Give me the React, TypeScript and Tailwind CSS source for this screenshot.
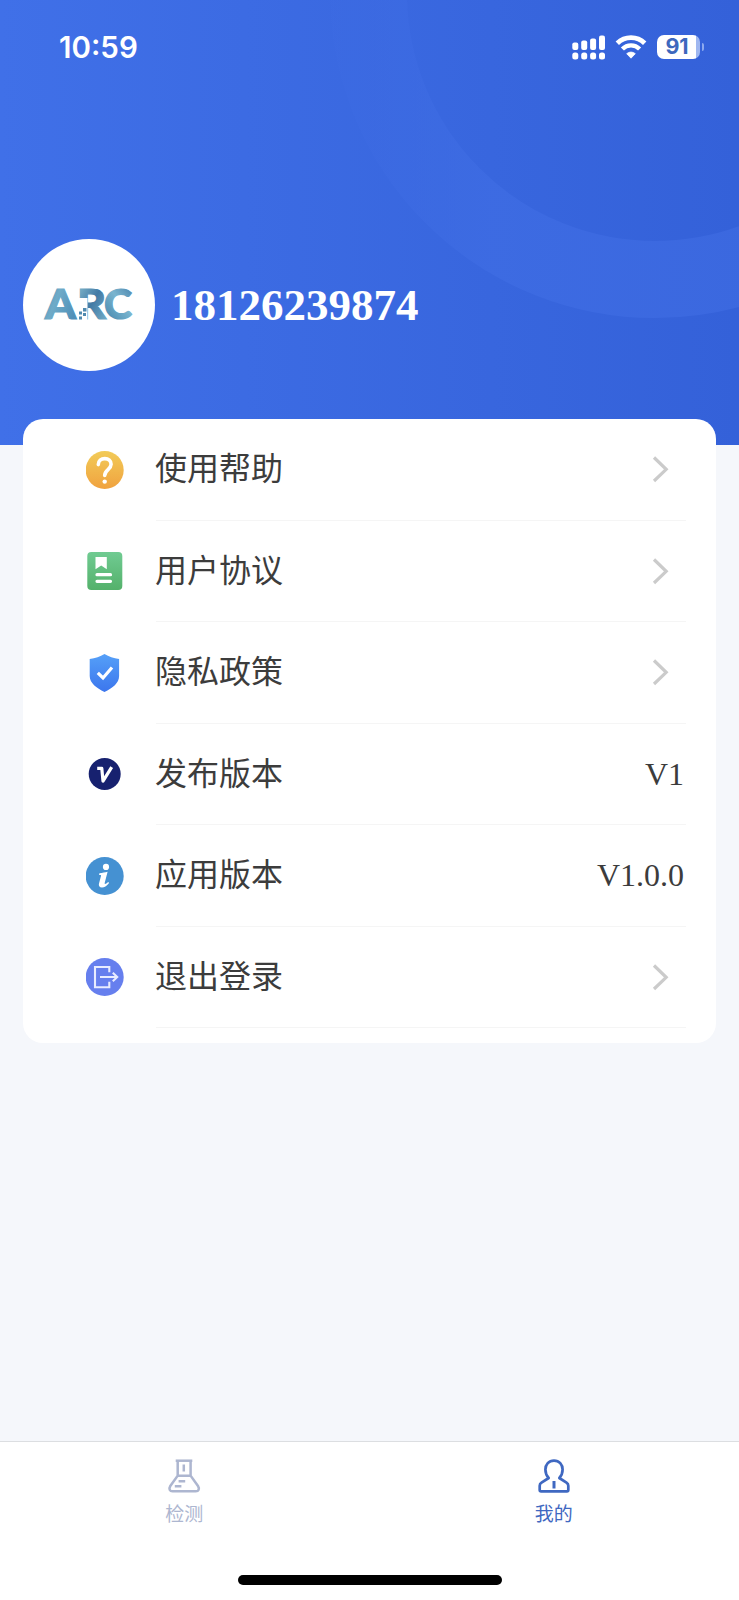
import type { ReactNode } from 'react';

type MenuItem = {
    label: string;
    icon: ReactNode;
    value?: string;
};

function HelpIcon() {
    return (
        <svg width="38" height="38" viewBox="0 0 38 38" fill="none">
            <defs>
                <linearGradient id="help" x1="0" y1="0" x2="0" y2="1">
                    <stop stopColor="#f2cb58" />
                    <stop offset="1" stopColor="#f0a23f" />
                </linearGradient>
            </defs>
            <circle cx="18.700" cy="19" r="19" fill="url(#help)" />
            <path d="M12.300 13.600c0-3.800 2.900-6 6.500-6s6.300 2.300 6.300 5.700c0 5.200-6.400 5.400-6.400 11.200" stroke="#fff" strokeWidth="3.600" strokeLinecap="round" />
            <circle cx="18.700" cy="30.600" r="2.200" fill="#fff" />
        </svg>
    );
}

function AgreementIcon() {
    return (
        <svg width="38" height="38" viewBox="0 0 38 38" fill="none">
            <defs>
                <linearGradient id="agreement" x1="0" y1="0" x2="0" y2="1">
                    <stop stopColor="#70cb92" />
                    <stop offset="1" stopColor="#54b16b" />
                </linearGradient>
            </defs>
            <rect x="1.300" width="35" height="38" rx="4" fill="url(#agreement)" />
            <path d="M9.500 5h11.300v12.200L15.200 13.500l-5.700 3.700z" fill="#fff" />
            <path d="M11 22.700h13.500M11 29.300h13.500" stroke="#fff" strokeWidth="3.200" strokeLinecap="round" />
        </svg>
    );
}

function PrivacyIcon() {
    return (
        <svg width="38" height="38" viewBox="0 0 38 38" fill="none">
            <defs>
                <linearGradient id="privacy" x1="0" y1="0" x2="0" y2="1">
                    <stop stopColor="#55a0f8" />
                    <stop offset="1" stopColor="#3c76ed" />
                </linearGradient>
            </defs>
            <path d="M18.500 0c4.500 2.800 9 4.300 14.600 5V22c0 7-6.400 12-14.600 16C10.500 34 3.700 29 3.700 22V5C9.500 4.300 14 2.800 18.500 0z" fill="url(#privacy)" />
            <path d="M11.800 18.800l5.200 5.200L26 13.500" stroke="#fff" strokeWidth="3.200" />
        </svg>
    );
}

function ReleaseIcon() {
    return (
        <svg width="38" height="38" viewBox="0 0 38 38" fill="none">
            <circle cx="18.700" cy="19" r="16" fill="#17216f" />
            <path d="M11.200 13.300h4.600l1.200 12.900L25.700 12.200" stroke="#fff" strokeWidth="3.200" strokeLinejoin="round" />
        </svg>
    );
}

function InfoIcon() {
    return (
        <svg width="38" height="38" viewBox="0 0 38 38" fill="none">
            <circle cx="18.700" cy="19" r="19" fill="#4591d2" />
            <circle cx="20" cy="9.900" r="3.100" fill="#fff" />
            <path d="M13.400 16.300c3.200-.4 5.600-1 8.200-1.500L18.700 26c-.4 1.500.9 1.400 3.600-.9l.8.900c-2.600 3.200-4.700 4.400-7.100 4.400-2.700 0-3.600-1.700-3-4l2-7.400c.3-.9-.2-1.200-1.900-1z" fill="#fff" />
        </svg>
    );
}

function LogoutIcon() {
    return (
        <svg width="38" height="38" viewBox="0 0 38 38" fill="none">
            <circle cx="18.700" cy="19" r="19" fill="#667fee" />
            <g stroke="#e8ecff" strokeWidth="2.100">
                <path d="M23.300 14.200V9H9v20.300h14.300v-5.500" />
                <path d="M14 19h17M26.800 14.800l4.400 4.200-4.400 4.200" />
            </g>
        </svg>
    );
}

function Chevron() {
    return (
        <svg width="18" height="28" viewBox="0 0 18 28" fill="none" className="mr-4">
            <path d="M2 2.500l12.200 11.800L2 26" stroke="#cbcbcb" strokeWidth="3.200" />
        </svg>
    );
}

function StatusBar() {
    return (
        <div className="flex h-[94px] items-center justify-between pl-[59px] pr-[35px] text-white">
            <span className="mt-px font-['Inter',sans-serif] text-[29.500px] font-semibold leading-none">10:59</span>
            <div className="flex items-center">
                <svg width="33" height="25" viewBox="0 0 33 25" fill="#fff">
                    <rect x="0.300" y="7.500" width="6" height="7.500" rx="2" />
                    <rect x="9.200" y="5.500" width="6" height="9.500" rx="2" />
                    <rect x="18.100" y="3.500" width="6" height="11.500" rx="2" />
                    <rect x="27" y="0.500" width="6" height="14.500" rx="2" />
                    <rect x="0.300" y="17.500" width="6" height="7" rx="2.500" />
                    <rect x="9.200" y="17.500" width="6" height="7" rx="2.500" />
                    <rect x="18.100" y="17.500" width="6" height="7" rx="2.500" />
                    <rect x="27" y="17.500" width="6" height="7" rx="2.500" />
                </svg>
                <svg width="32" height="24" viewBox="0 0 32 24" fill="none" className="ml-[10px]">
                    <path d="M2.300 8.200a19.500 19.500 0 0 1 27.400 0" stroke="#fff" strokeWidth="4.800" />
                    <path d="M7.400 14a12 12 0 0 1 17.200 0" stroke="#fff" strokeWidth="4.300" />
                    <path d="M11.700 18.700a6.500 6.500 0 0 1 8.600 0L16 23.200z" fill="#fff" stroke="#fff" strokeWidth="0.800" strokeLinejoin="round" />
                </svg>
                <div className="ml-[10px] flex h-6 w-[43px] items-center justify-center rounded-[7px] bg-[linear-gradient(to_right,#fff_39px,#9fb7f0_39px)] pr-[3px] font-['Inter',sans-serif] text-[21.500px] font-bold leading-none text-[#3d68bd]">
                    91
                </div>
                <div className="ml-[2px] h-2 w-[2px] rounded-r-full bg-[#8ca9ef]" />
            </div>
        </div>
    );
}

function Avatar() {
    return (
        <div className="flex h-[132px] w-[132px] items-center justify-center rounded-full bg-white">
            <svg width="110" height="70" viewBox="0 0 110 70" className="overflow-visible font-['Lato',sans-serif] text-[41px] font-black">
                <defs>
                    <linearGradient id="arcA" x1="0" y1="0" x2="1" y2="0.600">
                        <stop stopColor="#4583ad" />
                        <stop offset="0.450" stopColor="#6fabc8" />
                        <stop offset="1" stopColor="#4f8fb8" />
                    </linearGradient>
                    <linearGradient id="arcR" x1="0" y1="0" x2="1" y2="1">
                        <stop stopColor="#8ac3d3" />
                        <stop offset="0.500" stopColor="#437aa5" />
                        <stop offset="1" stopColor="#7ab5cd" />
                    </linearGradient>
                    <linearGradient id="arcC" x1="1" y1="0" x2="0.300" y2="1">
                        <stop stopColor="#4178a4" />
                        <stop offset="0.500" stopColor="#7ab5cf" />
                        <stop offset="1" stopColor="#4687ae" />
                    </linearGradient>
                </defs>
                <g strokeWidth="1.200">
                    <text x="11" y="49" textLength="31" lengthAdjust="spacingAndGlyphs" fill="url(#arcA)" stroke="url(#arcA)">A</text>
                    <text x="43" y="49" textLength="29" lengthAdjust="spacingAndGlyphs" fill="url(#arcR)" stroke="url(#arcR)">R</text>
                    <text x="70" y="49" textLength="28" lengthAdjust="spacingAndGlyphs" fill="url(#arcC)" stroke="url(#arcC)">C</text>
                </g>
                {/* pixels breaking off the R */}
                <rect x="44" y="28" width="9.500" height="23" fill="#fff" />
                <g fill="#4f8ab0">
                    <rect x="49" y="38" width="3.500" height="3.500" />
                    <rect x="45" y="41.500" width="3" height="3" />
                    <rect x="49" y="43" width="3" height="3" />
                    <rect x="45" y="46.500" width="3" height="3" />
                </g>
            </svg>
        </div>
    );
}

function Row({ item }: { item: MenuItem }) {
    return (
        <div className="flex h-[101.500px] items-stretch pl-[63px] pr-[30px]">
            <div className="flex w-[70px] items-center">{item.icon}</div>
            <div className="flex flex-1 items-center justify-between border-b border-[#f5f5f5]">
                <span className="-ml-px pb-[6px] text-[32px] leading-none text-[#3c3c3c]">{item.label}</span>
                {item.value ? (
                    <span className="mr-[2px] font-['Liberation_Serif',serif] text-[32px] leading-none text-[#3c3c3c]">{item.value}</span>
                ) : (
                    <Chevron />
                )}
            </div>
        </div>
    );
}

const items: MenuItem[] = [
    { label: '使用帮助', icon: <HelpIcon /> },
    { label: '用户协议', icon: <AgreementIcon /> },
    { label: '隐私政策', icon: <PrivacyIcon /> },
    { label: '发布版本', icon: <ReleaseIcon />, value: 'V1' },
    { label: '应用版本', icon: <InfoIcon />, value: 'V1.0.0' },
    { label: '退出登录', icon: <LogoutIcon /> },
];

function TabBar() {
    return (
        <nav className="h-[159px] border-t border-[#dcdee1] bg-white">
            <div className="flex h-[133px]">
                <div className="flex flex-1 flex-col items-center pt-4 text-[#adb6d0]">
                    <svg width="34" height="36" viewBox="0 0 34 36" fill="none" stroke="currentColor" strokeWidth="2.500" className="-ml-px">
                        <path d="M8.700 2.700h16.600" />
                        <path d="M10.700 2.700v15L3.300 28c-1.700 2.800-.6 5.300 2.200 5.300h23.300c2.800 0 4-2.500 2.200-5.300L23.600 17.700v-15" />
                        <path d="M10.700 17.700h12.900M16.800 6.500v7M11.600 23.200h6.600M7.800 28.200h6.600" />
                    </svg>
                    <span className="-ml-px mt-[9px] text-[19px] leading-none">检测</span>
                </div>
                <div className="flex flex-1 flex-col items-center pt-4 text-[#3f68c1]">
                    <svg width="34" height="36" viewBox="0 0 34 36" fill="none" stroke="currentColor" strokeWidth="2.700" strokeLinejoin="round">
                        <path d="M11.700 20C9.500 17.800 8.400 15 8.400 11.600 8.400 6.400 11.800 2.600 17 2.600s8.600 3.800 8.600 9c0 3.400-1.100 6.200-3.300 8.400l7.200 4.600c1.300.8 1.800 1.800 1.800 3.200v4.200c0 .9-.5 1.400-1.400 1.400H4.100c-.9 0-1.400-.5-1.400-1.400v-4.200c0-1.400.5-2.400 1.800-3.200z" />
                        <path d="M17 23v7.500" strokeWidth="3" strokeLinejoin="miter" />
                    </svg>
                    <span className="-ml-px mt-[9px] text-[19px] leading-none">我的</span>
                </div>
            </div>
            <div className="mx-auto h-[10px] w-[264px] rounded-full bg-black" />
        </nav>
    );
}

export default function App() {
    return (
        <div className="flex h-[1600px] w-[739px] flex-col overflow-hidden bg-[#f5f7fb] font-['Noto_Sans_CJK_SC',sans-serif]">
            <header className="relative h-[445px] shrink-0 bg-linear-to-r from-[#4070e8] to-[#3461d9]">
                {/* decorative ring in the top right corner */}
                <svg className="absolute inset-0" width="739" height="445" fill="none">
                    <defs>
                        <linearGradient id="ring" gradientUnits="userSpaceOnUse" x1="330" y1="0" x2="739" y2="0">
                            <stop stopColor="#3e6ce4" stopOpacity="0.200" />
                            <stop offset="0.400" stopColor="#3e6ce3" stopOpacity="0.800" />
                            <stop offset="1" stopColor="#3c69e0" stopOpacity="0.900" />
                        </linearGradient>
                    </defs>
                    <circle cx="655" cy="-7" r="286.500" stroke="url(#ring)" strokeWidth="77" />
                </svg>
                <div className="relative">
                    <StatusBar />
                    <div className="mt-[145px] flex items-center pl-[23px]">
                        <Avatar />
                        <span className="ml-4 font-['Liberation_Serif',serif] text-[45px] font-bold leading-none text-white">18126239874</span>
                    </div>
                </div>
            </header>
            <main className="relative mx-[23px] -mt-[26px] h-[623.500px] shrink-0 rounded-[20px] bg-white">
                {items.map((item) => (
                    <Row key={item.label} item={item} />
                ))}
            </main>
            <div className="flex-1" />
            <TabBar />
        </div>
    );
}
